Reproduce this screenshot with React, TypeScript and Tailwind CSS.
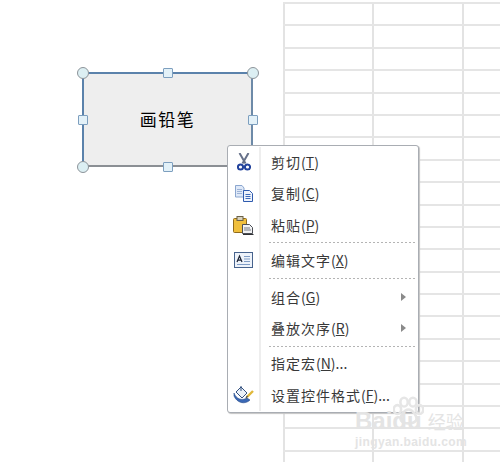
const rows = Array.from({ length: 21 });
const cjk = { fontFamily: '"Noto Sans CJK SC", "Liberation Sans", sans-serif' };

function Handle({ round, className }: { round?: boolean; className: string }) {
  if (round) {
    return <div className={`absolute size-[12px] rounded-full border border-[#8c9399] bg-[#dceff3] ${className}`} />;
  }
  return <div className={`absolute size-[10px] rounded-[1px] border border-[#7d9fbf] bg-[#e3f1f8] ${className}`} />;
}

function Scissors() {
  return (
    <svg width="14" height="18" viewBox="0 0 14 18">
      <path d="M2.5 0 L8.5 10.5 M11.5 0 L5.5 10.5" stroke="#67728a" strokeWidth="2" fill="none" />
      <circle cx="3.5" cy="14" r="2.6" fill="none" stroke="#23439c" strokeWidth="2" />
      <circle cx="10.5" cy="14" r="2.6" fill="none" stroke="#23439c" strokeWidth="2" />
    </svg>
  );
}

function CopyIcon() {
  return (
    <svg width="20" height="17" viewBox="0 0 20 17">
      <path d="M1.5 .5 H8 L10 3 V12 H1.5 Z" fill="#dfe9f8" stroke="#8ba6cf" />
      <path d="M3 4.5 H8 M3 6.5 H8 M3 8.5 H8" stroke="#9db3d6" />
      <path d="M9.5 5.5 H15.5 L18.5 8.5 V16.5 H9.5 Z" fill="#eef3fc" stroke="#2f5bae" />
      <path d="M11.5 9.5 H16.5 M11.5 11.5 H16.5 M11.5 13.5 H16.5" stroke="#3f6bb8" />
    </svg>
  );
}

function PasteIcon() {
  return (
    <svg width="21" height="19" viewBox="0 0 21 19">
      <rect x=".5" y="2.5" width="13" height="14" rx="1" fill="#f0bf3c" stroke="#8f6a1c" />
      <rect x="4" y=".5" width="6" height="4" fill="#d8d2bd" stroke="#6b6147" />
      <path d="M9.5 8.5 H16.5 L19.5 11.5 V17.5 H9.5 Z" fill="#f1f2f4" stroke="#4c4f55" />
      <path d="M11 12 H17 M11 14 H18" stroke="#777b82" />
      <path d="M10 18.5 H20.5" stroke="#303236" />
    </svg>
  );
}

function EditIcon() {
  return (
    <svg width="19" height="16" viewBox="0 0 19 16">
      <rect x=".5" y=".5" width="18" height="15" fill="#eef3fa" stroke="#47638d" />
      <path d="M3 10 L5.5 4 L8 10 M4 8.2 H7" stroke="#1a2233" strokeWidth="1.2" fill="none" />
      <path d="M10 4.5 H16 M10 7 H16 M10 9.5 H16 M3 12.5 H16" stroke="#7f9cc5" />
    </svg>
  );
}

function FormatIcon() {
  return (
    <svg width="21" height="20" viewBox="0 0 21 20">
      <path d="M3 7 L8 2 L14 8 L9 13 Z" fill="#eaf0f8" stroke="#33507f" />
      <path d="M8 1 V6" stroke="#33507f" />
      <path d="M1 8 C3 14 9 16 14 13 L17 15 C12 20 4 18 1 11 Z" fill="#3a68b5" stroke="#274a88" strokeWidth=".6" />
      <path d="M14 12 L20 6" stroke="#e0b83a" strokeWidth="2.4" />
      <path d="M13 13 L14.5 11" stroke="#555" strokeWidth="1.4" />
    </svg>
  );
}

function Item({ label, hot, tail, icon, arrow, className }: { label: string; hot: string; tail?: string; icon?: React.ReactNode; arrow?: boolean; className: string }) {
  return (
    <div className={`flex items-center ${className}`}>
      <div className="flex w-[31px] shrink-0 justify-center">{icon}</div>
      <div className="ml-[12px] flex-1 whitespace-nowrap text-[14px] leading-none text-[#383838]">
        <span className="tracking-[1px]">{label}</span>(<span className="underline">{hot}</span>){tail}
      </div>
      {arrow && <div className="mr-[12px] h-0 w-0 border-y-[4px] border-l-[5px] border-y-transparent border-l-[#8a8a8a]" />}
    </div>
  );
}

function Sep({ className }: { className: string }) {
  return <div className={`ml-[41px] mr-[2px] h-px bg-[repeating-linear-gradient(90deg,#b4b4b4_0_2px,transparent_2px_4px)] ${className}`} />;
}

export default function App() {
  return (
    <div className="relative h-[462px] w-[500px] overflow-hidden bg-white" style={cjk}>
      {/* sheet cells */}
      <div className="ml-[283px] pt-[2px]">
        {rows.map((_, i) => (
          <div key={i} className="flex h-[22.4px] border-t-2 border-[#e5e5e5]">
            <div className="w-[89px] shrink-0 border-l-2 border-[#e3e3e3]" />
            <div className="w-[90px] shrink-0 border-l-2 border-[#e3e3e3]" />
            <div className="flex-1 border-l-2 border-[#e3e3e3]" />
          </div>
        ))}
      </div>

      {/* shape */}
      <div className="absolute left-[82px] top-[72px] h-[95px] w-[171px] border-2 border-[#5b82ab] border-b-[#8b8f94] border-r-[#6d8aa8] bg-[#eeeeee] pt-[33px] text-center text-[17px] leading-[24px] tracking-[1.5px] text-black">
        画铅笔
      </div>
      <Handle round className="left-[77px] top-[67px]" />
      <Handle round className="left-[247px] top-[67px]" />
      <Handle round className="left-[77px] top-[161px]" />
      <Handle className="left-[163px] top-[68px]" />
      <Handle className="left-[78px] top-[115px]" />
      <Handle className="left-[248px] top-[115px]" />
      <Handle className="left-[163px] top-[162px]" />

      {/* context menu */}
      <div className="absolute left-[227px] top-[145px] h-[268px] w-[192px] rounded-[3px] border border-[#a9adb3] bg-white shadow-[1px_1px_1px_#c4c4c4]">
        <div className="absolute bottom-px left-[31px] top-px w-[2px] bg-[#eeeeee]" />
        <div className="relative flex flex-col">
          <Item label="剪切" hot="T" icon={<Scissors />} className="mt-[1px] h-[30px]" />
          <Item label="复制" hot="C" icon={<CopyIcon />} className="mt-[1px] h-[30px]" />
          <Item label="粘贴" hot="P" icon={<PasteIcon />} className="mt-[2px] h-[30px]" />
          <Sep className="mt-[2px]" />
          <Item label="编辑文字" hot="X" icon={<EditIcon />} className="h-[34px]" />
          <Sep className="mt-[1px]" />
          <Item label="组合" hot="G" arrow className="mt-[2px] h-[32px]" />
          <Item label="叠放次序" hot="R" arrow className="h-[30px]" />
          <Sep className="mt-[3px]" />
          <Item label="指定宏" hot="N" tail="..." className="h-[32px]" />
          <Item label="设置控件格式" hot="F" tail="..." icon={<FormatIcon />} className="mt-[1px] h-[30px]" />
        </div>
      </div>

      {/* watermark */}
      <div className="absolute left-[355px] top-[407px] text-[#e4e4e4]">
        <svg className="absolute left-[38px] top-[-12px]" width="31" height="32" viewBox="0 0 42 38" fill="none" stroke="#e6e6e6" strokeWidth="3.5">
          <ellipse cx="6" cy="17" rx="5" ry="6" />
          <ellipse cx="15" cy="7" rx="5" ry="6" />
          <ellipse cx="27" cy="7" rx="5" ry="6" />
          <ellipse cx="36" cy="17" rx="5" ry="6" />
          <path d="M21 17 C15 17 8 27 11 32 C15 37 27 37 31 32 C34 27 27 17 21 17 Z" />
        </svg>
        <div className="relative flex items-baseline whitespace-nowrap font-['Liberation_Sans'] text-[24px] font-bold leading-[28px]">
          <span>Baidu</span>
          <span className="ml-[6px] text-[18px] font-normal leading-[28px]" style={cjk}>经验</span>
        </div>
        <div className="relative whitespace-nowrap font-['Liberation_Sans'] text-[12px] font-bold leading-[14px] tracking-[.4px]">
          jingyan.baidu.com
        </div>
      </div>
    </div>
  );
}
